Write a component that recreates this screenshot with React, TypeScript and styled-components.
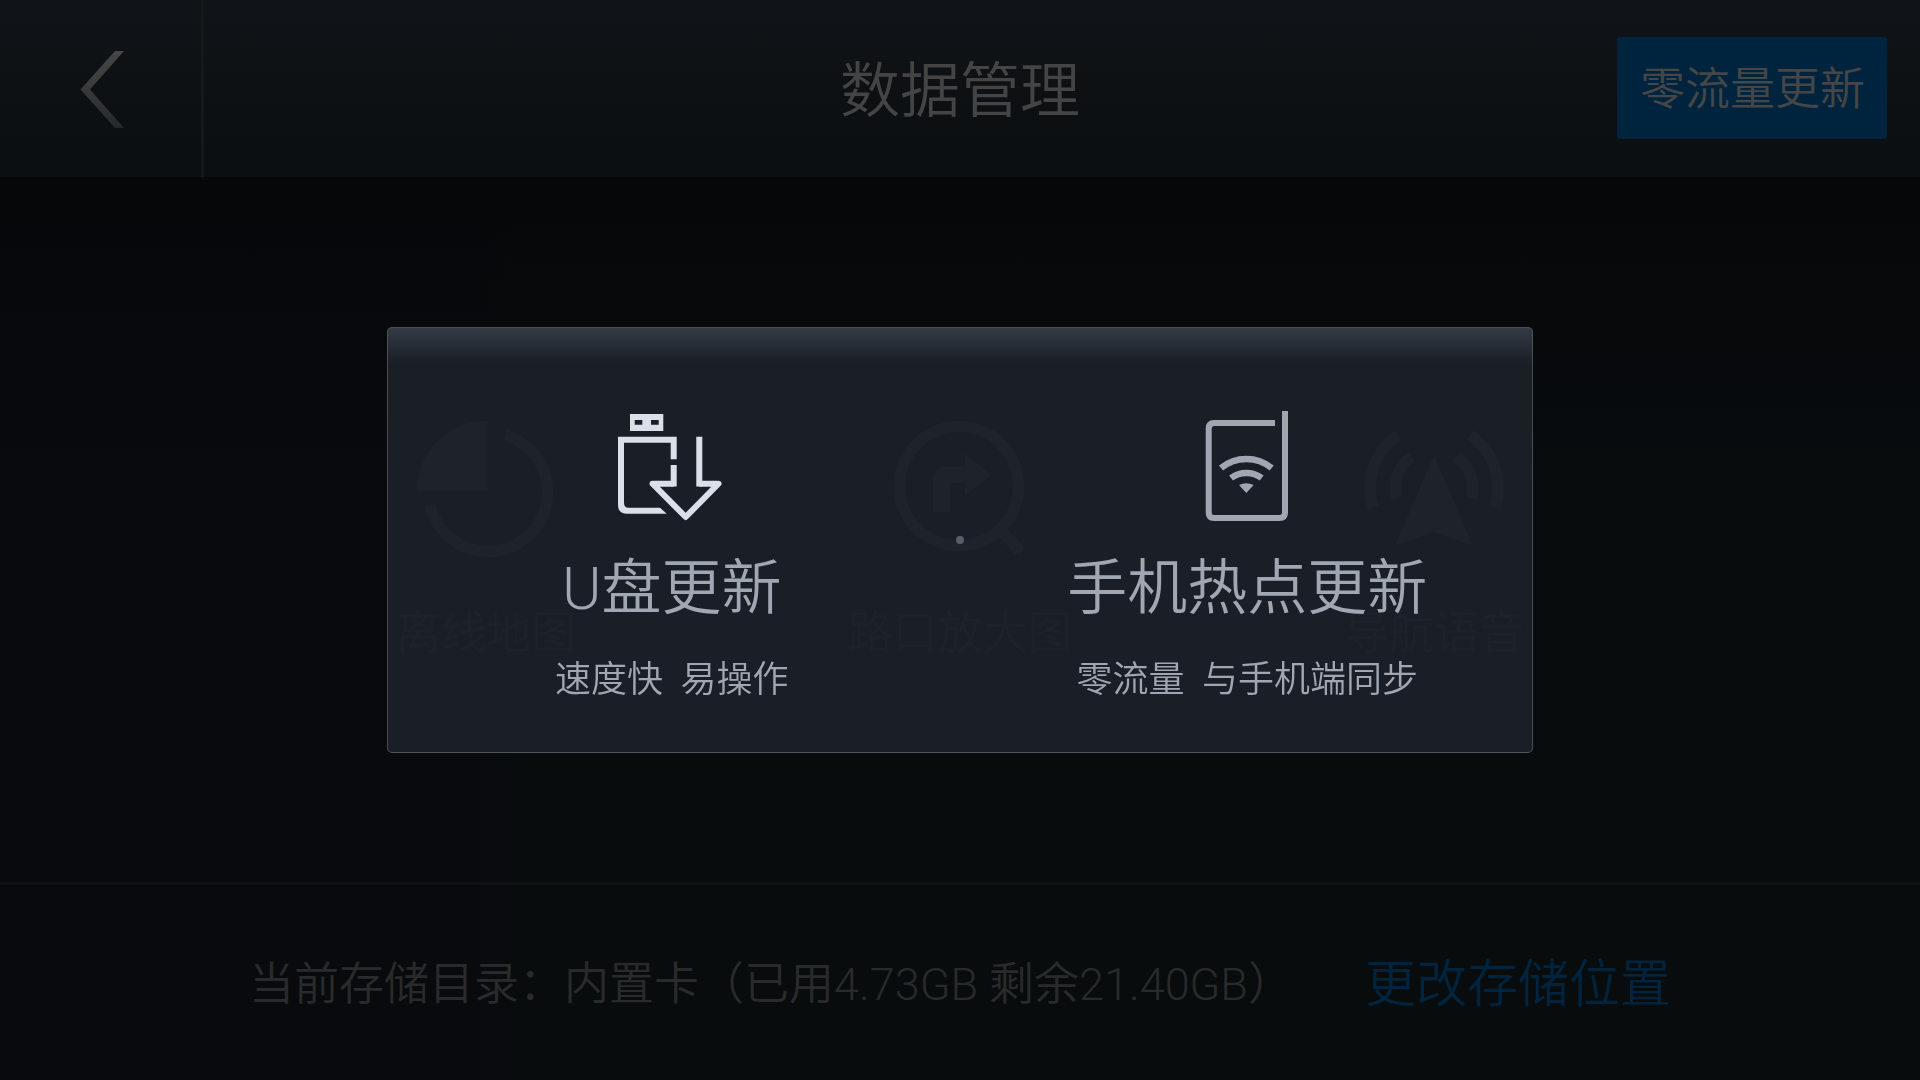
import React from "react";
import styled, { createGlobalStyle } from "styled-components";

const GlobalStyle = createGlobalStyle`
  *, *::before, *::after {
    box-sizing: border-box;
  }
  body {
    margin: 0;
    background: #080c0d;
    font-family: Roboto, "Noto Sans CJK SC", sans-serif;
    font-weight: 350;
  }
  button {
    font: inherit;
    color: inherit;
    border: 0;
    padding: 0;
    background: none;
    cursor: pointer;
  }
`;

const Page = styled.div`
  display: flex;
  flex-direction: column;
  min-height: 100vh;
  background: linear-gradient(90deg, #090a0d 0, #090a0d 25%, #080c0d 27%, #080c0d 100%);
`;

const Header = styled.header`
  display: grid;
  grid-template-columns: 1fr auto 1fr;
  align-items: center;
  height: 177px;
  background: linear-gradient(180deg, #101418 0%, #0d1013 60%, #0b0f11 100%);
`;

const BackButton = styled.button`
  display: flex;
  align-items: center;
  justify-content: center;
  width: 204px;
  height: 177px;
  padding: 2px 0 0 4px;
  border-right: 3px solid #14181b;
`;

const PageTitle = styled.h1`
  margin: 0;
  padding-top: 6px;
  font-size: 60px;
  font-weight: inherit;
  line-height: 72px;
  color: #444444;
`;

const UpdateButton = styled.button`
  align-self: start;
  justify-self: end;
  margin: 37px 33px 0 0;
  padding: 26px 22px 22px 23px;
  border-radius: 3px;
  background: #00243d;
  color: #444648;
  font-size: 45px;
  line-height: 54px;
`;

const Main = styled.main`
  flex: 1;
  display: flex;
  align-items: center;
  justify-content: center;
  padding: 19px 249px 0;
  background: linear-gradient(180deg, #060709 0, rgba(6, 7, 9, 0) 320px);
`;

const Category = styled.button`
  flex: 1;
  display: flex;
  flex-direction: column;
  align-items: center;
  gap: 45px;
  color: #3c3c3c;
`;

const CategoryName = styled.span`
  font-size: 45px;
  line-height: 54px;
  color: #262829;
`;

const Footer = styled.footer`
  display: flex;
  align-items: center;
  justify-content: center;
  gap: 72px;
  height: 198px;
  padding: 4px 0 0;
  border-top: 3px solid #0e1213;
`;

const StorageInfo = styled.p`
  margin: 0;
  font-size: 45px;
  line-height: 60px;
  color: #282a2b;
`;

const StorageLink = styled.a`
  font-size: 51px;
  line-height: 60px;
  color: #00243d;
  text-decoration: none;
`;

const Overlay = styled.div`
  position: fixed;
  inset: 0;
  display: flex;
  align-items: center;
  justify-content: center;
`;

const Dialog = styled.section`
  display: flex;
  align-items: center;
  width: 100%;
  max-width: 1146px;
  padding-right: 1px;
  border: 1px solid rgba(84, 90, 98, 0.8);
  border-radius: 5px;
  background:
    linear-gradient(180deg, rgba(54, 61, 72, 0.92) 0, rgba(54, 61, 72, 0) 36px),
    rgba(28, 33, 40, 0.92);
`;

const Option = styled.button`
  flex: 1;
  display: flex;
  flex-direction: column;
  align-items: center;
  padding: 83px 0 51px;
  color: #a0a6b2;
`;

const OptionTitle = styled.span`
  margin-top: 30px;
  font-size: 60px;
  line-height: 72px;
`;

const OptionNote = styled.span`
  margin-top: 34px;
  font-size: 36px;
  line-height: 42px;
  white-space: pre;
`;

const Dot = styled.span`
  width: 8px;
  height: 8px;
  border-radius: 50%;
  background: #5a5f6b;
`;

const BackIcon = () => (
  <svg width="45" height="78" viewBox="0 0 45 78" aria-hidden="true">
    <defs>
      <linearGradient id="chevron" x1="0" y1="0" x2="0" y2="1">
        <stop offset="0" stopColor="#464646" />
        <stop offset="0.45" stopColor="#3a3b3c" />
        <stop offset="1" stopColor="#24282c" />
      </linearGradient>
    </defs>
    <path d="M35 0H44L10 38.500L44 77H35L0.500 38.500Z" fill="url(#chevron)" />
  </svg>
);

const MapIcon = () => (
  <svg width="144" height="144" viewBox="0 0 144 144" fill="none" aria-hidden="true">
    <path d="M73.500 72.500V3A70 69.500 0 0 0 3 72.500Z" fill="currentColor" />
    <path d="M92 17.300A59.500 59.500 0 1 1 16 87" stroke="currentColor" strokeWidth="11" />
  </svg>
);

const JunctionIcon = () => (
  <svg width="144" height="144" viewBox="0 0 144 144" fill="none" aria-hidden="true">
    <circle cx="71" cy="68" r="59.500" stroke="currentColor" strokeWidth="11" />
    <path d="M113 112L130 131" stroke="currentColor" strokeWidth="11" strokeLinecap="round" />
    <path
      d="M45 94V63Q45 49 59 49H77V36L103 56.500L77 78V65H66Q62 65 62 69V94Z"
      fill="currentColor"
    />
  </svg>
);

const VoiceIcon = () => (
  <svg width="144" height="144" viewBox="0 0 144 144" fill="none" aria-hidden="true">
    <path
      d="M72 41L108 125L72 112L36 125Z"
      fill="currentColor"
      stroke="currentColor"
      strokeWidth="3"
      strokeLinejoin="round"
    />
    <path
      d="M36 17A64 64 0 0 0 11 89M108 17A64 64 0 0 1 133 89M49 39A39 39 0 0 0 34.500 80M95 39A39 39 0 0 1 109.500 80"
      stroke="currentColor"
      strokeWidth="11"
    />
  </svg>
);

const UsbIcon = () => (
  <svg width="120" height="112" viewBox="0 0 120 112" fill="none" aria-hidden="true">
    <path
      d="M18 3H51.300V20H18ZM22.700 9V13.700H30.300V9ZM39 9V13.700H46.700V9Z"
      fill="#dbdfe9"
      fillRule="evenodd"
    />
    <path
      d="M6 25.700H64.700V48.300H58.700V31.700H12V92Q12 96.700 16.500 96.700H48L54.700 102.700H15Q6 102.700 6 94Z"
      fill="#dbdfe9"
    />
    <path
      d="M61.700 54V75.500M87.300 25.700V75.500"
      stroke="#dbdfe9"
      strokeWidth="6"
    />
    <path
      d="M61.700 72.700H40.500L73.700 106L106.500 72.700H87.300"
      stroke="#dbdfe9"
      strokeWidth="6"
      strokeLinejoin="round"
    />
  </svg>
);

const HotspotIcon = () => (
  <svg width="120" height="112" viewBox="0 0 120 112" fill="none" aria-hidden="true">
    <path
      d="M88 12H27Q21.700 12 21.700 17.500V101.500Q21.700 107 27 107H92.500Q98 107 98 101.500V0"
      stroke="currentColor"
      strokeWidth="6"
    />
    <path
      d="M34 57A40 40 0 0 1 84.700 57M44 67A26 26 0 0 1 74.700 67"
      stroke="currentColor"
      strokeWidth="6.500"
    />
    <path d="M52 74Q59.300 70.500 66.700 74L59.300 82Z" fill="currentColor" />
  </svg>
);

const categories = [
  { name: "离线地图", Icon: MapIcon },
  { name: "路口放大图", Icon: JunctionIcon },
  { name: "导航语音", Icon: VoiceIcon },
];

export default function App() {
  return (
    <>
      <GlobalStyle />
      <Page lang="zh-CN">
        <Header>
          <BackButton aria-label="返回">
            <BackIcon />
          </BackButton>
          <PageTitle>数据管理</PageTitle>
          <UpdateButton>零流量更新</UpdateButton>
        </Header>
        <Main>
          {categories.map(({ name, Icon }) => (
            <Category key={name}>
              <Icon />
              <CategoryName>{name}</CategoryName>
            </Category>
          ))}
        </Main>
        <Footer>
          <StorageInfo>当前存储目录：内置卡（已用4.73GB 剩余21.40GB）</StorageInfo>
          <StorageLink href="#storage">更改存储位置</StorageLink>
        </Footer>
      </Page>
      <Overlay>
        <Dialog role="dialog" aria-modal="true" aria-label="零流量更新">
          <Option>
            <UsbIcon />
            <OptionTitle>U盘更新</OptionTitle>
            <OptionNote>{"速度快  易操作"}</OptionNote>
          </Option>
          <Dot />
          <Option>
            <HotspotIcon />
            <OptionTitle>手机热点更新</OptionTitle>
            <OptionNote>{"零流量  与手机端同步"}</OptionNote>
          </Option>
        </Dialog>
      </Overlay>
    </>
  );
}
